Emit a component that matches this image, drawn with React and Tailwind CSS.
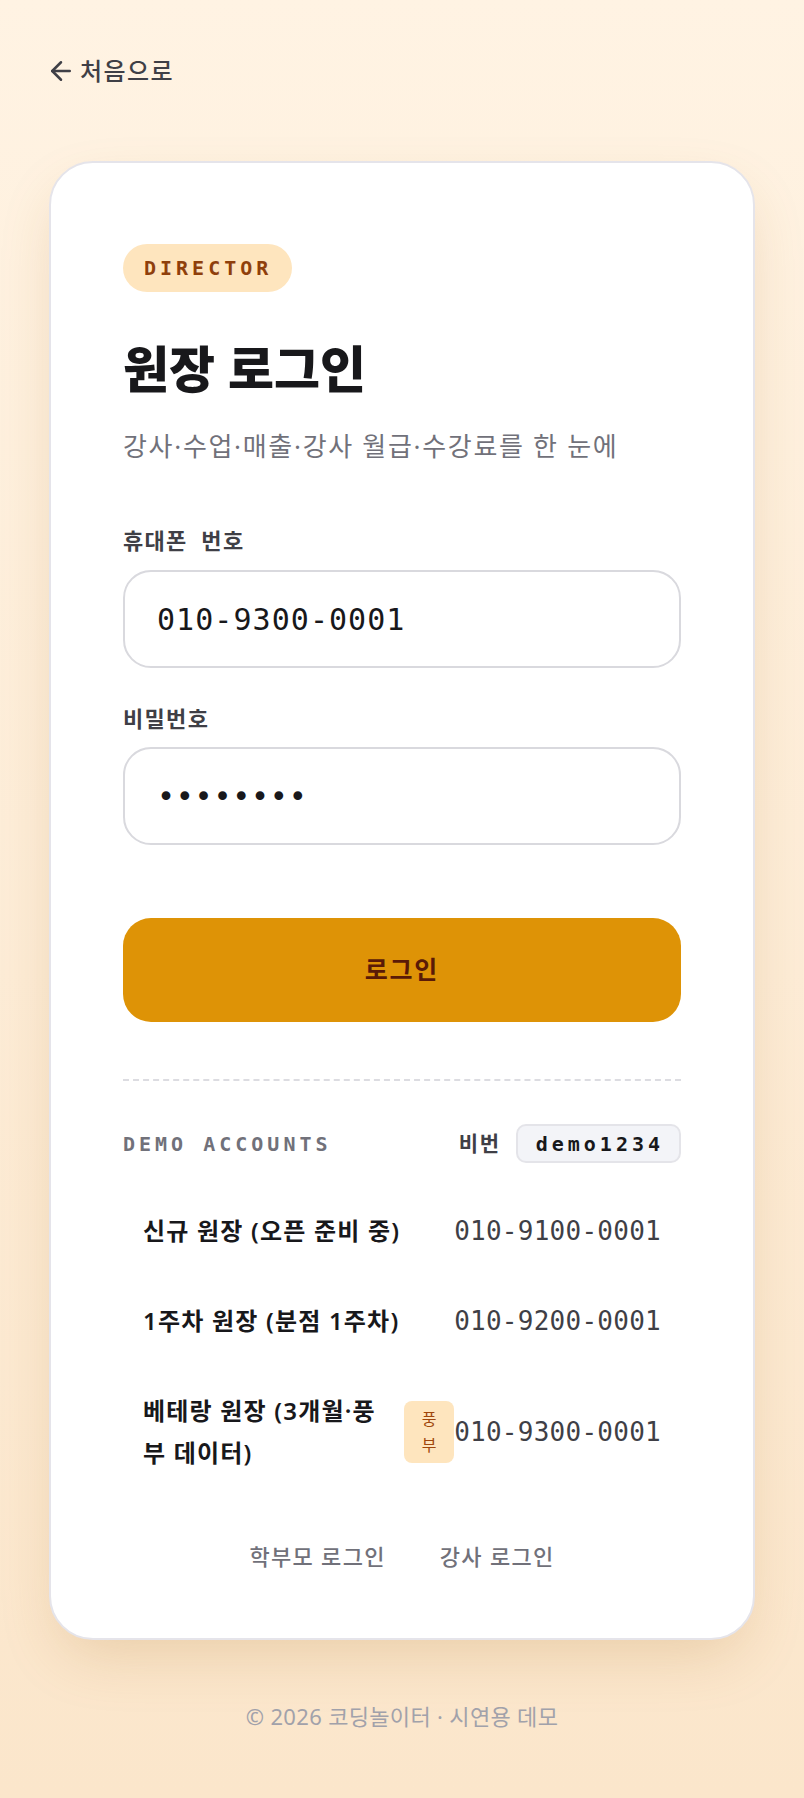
import React from "react";
import { ArrowLeft } from "lucide-react";

const demoAccounts = [
  { name: "신규 원장 (오픈 준비 중)", phone: "010-9100-0001" },
  { name: "1주차 원장 (분점 1주차)", phone: "010-9200-0001" },
  { name: "베테랑 원장 (3개월·풍부 데이터)", phone: "010-9300-0001", tag: "풍부" },
];

function App() {
  return (
    <div className="min-h-screen bg-linear-to-b from-[#fff3e3] to-[#fbe6cb] font-['Noto_Sans','Noto_Sans_CJK_KR',sans-serif]">
      <div className="mx-auto w-[706px] pt-[54px] pb-[64px]">
        <a
          href="#"
          className="-ml-[3px] flex w-fit items-center gap-1 text-[24px] font-medium leading-[34px] tracking-[0.06em] text-[#3f3f46]"
        >
          <ArrowLeft size={30} strokeWidth={2} />
          처음으로
        </a>

        <div className="mt-[73px] rounded-[44px] border-2 border-[#e5e4ea] bg-white px-[72px] pt-[81px] pb-[65px] shadow-[0_24px_60px_-12px_rgba(170,110,30,0.22)]">
          <span className="inline-flex h-[48px] items-center rounded-full bg-[#fee5be] pl-[21px] pr-[20px] font-['DejaVu_Sans_Mono',monospace] text-[20px] font-bold tracking-[0.2em] text-[#8f3f0b]">
            DIRECTOR
          </span>
          <h1 className="mt-[47px] text-[50px] font-extrabold leading-[60px] text-[#18181b]">
            원장 로그인
          </h1>
          <p className="mt-[28px] text-[26px] leading-[38px] tracking-[0.065em] text-[#71717a]">
            강사·수업·매출·강사 월급·수강료를 한 눈에
          </p>

          <form className="mt-[59px]" onSubmit={(e) => e.preventDefault()}>
            <label className="block text-[22px] font-semibold leading-[32px] tracking-[0.06em] text-[#3f3f46] [word-spacing:0.3em]">
              휴대폰 번호
            </label>
            <input
              type="tel"
              readOnly
              value="010-9300-0001"
              className="mt-[14px] block h-[98px] w-full rounded-[28px] border-2 border-[#d9d9de] bg-white px-8 font-['DejaVu_Sans_Mono',monospace] text-[30px] tracking-[0.035em] text-[#18181b] outline-none"
            />

            <label className="mt-[34px] block text-[22px] font-semibold leading-[32px] tracking-[0.06em] text-[#3f3f46]">
              비밀번호
            </label>
            <input
              type="password"
              readOnly
              value="demo1234"
              className="mt-[13px] block h-[98px] w-full rounded-[28px] border-2 border-[#d9d9de] bg-white px-8 font-['DejaVu_Sans_Mono',monospace] text-[30px] tracking-[0.025em] text-[#18181b] outline-none"
            />

            <button
              type="submit"
              className="mt-[73px] block h-[104px] w-full rounded-[28px] bg-[#de9306] text-[25px] font-bold tracking-[0.07em] text-[#5a1a06]"
            >
              로그인
            </button>
          </form>

          <div className="mt-[57px] border-t-2 border-dashed border-[#dcdce1]" />

          <div className="mt-[43px] flex items-center justify-between">
            <span className="font-['DejaVu_Sans_Mono',monospace] text-[20px] font-bold tracking-[0.2em] text-[#71717a]">
              DEMO ACCOUNTS
            </span>
            <div className="flex items-center gap-[15px]">
              <span className="text-[21px] font-semibold tracking-[0.08em] text-[#3f3f46]">비번</span>
              <span className="flex h-[39px] items-center rounded-[10px] border-2 border-[#e4e4e9] bg-[#f3f4f8] pl-[18px] pr-[15px] font-['DejaVu_Sans_Mono',monospace] text-[20px] font-bold tracking-[0.2em] text-[#18181b]">
                demo1234
              </span>
            </div>
          </div>

          <ul className="mt-[23px]">
            {demoAccounts.map((acc) => (
              <li
                key={acc.phone}
                className="flex items-center justify-between rounded-2xl px-5 py-6 hover:bg-[#fff7ec]"
              >
                <div className="flex min-w-0 items-center gap-3">
                  <span className="text-[24px] font-semibold leading-[42px] tracking-[0.05em] text-[#18181b]">
                    {acc.name}
                  </span>
                  {acc.tag && (
                    <span className="w-[50px] shrink-0 rounded-lg bg-[#fee5be] px-[17px] py-[5px] text-center text-[16px] leading-[26px] text-[#a0470c]">
                      {acc.tag}
                    </span>
                  )}
                </div>
                <span className="shrink-0 font-['DejaVu_Sans_Mono',monospace] text-[26px] tracking-[0.01em] text-[#3f3f46]">
                  {acc.phone}
                </span>
              </li>
            ))}
          </ul>

          <div className="mt-[42px] flex justify-center gap-[54px] text-[22px] font-medium leading-[33px] tracking-[0.06em] text-[#71717a]">
            <a href="#">학부모 로그인</a>
            <a href="#">강사 로그인</a>
          </div>
        </div>

        <p className="mt-[60px] text-center text-[22px] leading-[32px] tracking-[0.015em] text-[#a1a1aa]">
          © 2026 코딩놀이터 · 시연용 데모
        </p>
      </div>
    </div>
  );
}

export default App;
